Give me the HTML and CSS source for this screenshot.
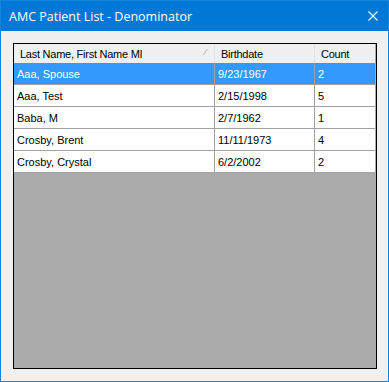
FILE: index.html
```html
<!DOCTYPE html>
<html>
<head>
    <title>AMC Patient List - Denominator</title>
    <link rel="stylesheet" href="styles.css">
</head>
<body>
    <div class="window">
        <div class="titlebar">
            <span class="title">AMC Patient List - Denominator</span>
            <svg class="close" width="10" height="10" viewBox="0 0 10 10">
                <path d="M0.5 0.5 L9.5 9.5 M9.5 0.5 L0.5 9.5" stroke="#fff" stroke-width="1.1" fill="none"/>
            </svg>
        </div>
        <div class="content">
            <div class="grid">
                <table>
                    <thead>
                        <tr>
                            <th class="col-name">Last Name, First Name MI<span class="sort">&#8260;</span></th>
                            <th class="col-date">Birthdate</th>
                            <th class="col-count">Count</th>
                        </tr>
                    </thead>
                    <tbody>
                        <tr class="selected"><td>Aaa, Spouse</td><td>9/23/1967</td><td>2</td></tr>
                        <tr><td>Aaa, Test</td><td>2/15/1998</td><td>5</td></tr>
                        <tr><td>Baba, M</td><td>2/7/1962</td><td>1</td></tr>
                        <tr><td>Crosby, Brent</td><td>11/11/1973</td><td>4</td></tr>
                        <tr><td>Crosby, Crystal</td><td>6/2/2002</td><td>2</td></tr>
                    </tbody>
                </table>
                <div class="empty"></div>
            </div>
        </div>
    </div>
</body>
</html>
```

FILE: styles.css
```css
body {
    margin: 0;
    padding: 0;
    font-family: "Liberation Sans", Arial, sans-serif;
}
.window {
    width: 389px;
    height: 382px;
    box-sizing: border-box;
    border: 1px solid #1883d7;
    background-color: #f0f0f0;
    display: flex;
    flex-direction: column;
}
.titlebar {
    height: 30px;
    background-color: #0078d7;
    display: flex;
    align-items: center;
    justify-content: space-between;
    padding: 0 8px 0 8px;
    flex-shrink: 0;
}
.title {
    color: #fff;
    font-family: "Open Sans", sans-serif;
    font-size: 12.5px;
}
.close {
    margin-right: 2px;
}
.content {
    flex: 1;
    padding: 12px 11px 12px 12px;
    display: flex;
}
.grid {
    flex: 1;
    border: 1px solid #000;
    background-color: #ababab;
    display: flex;
    flex-direction: column;
}
table {
    border-collapse: collapse;
    width: 361px;
    font-size: 11px;
    table-layout: fixed;
}
th {
    background-color: #f0f0f0;
    font-weight: normal;
    text-align: left;
    height: 19px;
    padding: 0 0 0 6px;
    color: #000;
    letter-spacing: -0.25px;
    position: relative;
    border-left: 1px solid #e3e3e3;
}
th:first-child {
    border-left: none;
}
.col-name {
    width: 194px;
}
.col-date {
    width: 93px;
}
.sort {
    position: absolute;
    right: 8px;
    top: 3px;
    color: #999;
    font-size: 9px;
}
td {
    background-color: #fff;
    height: 21px;
    padding: 0 0 0 3px;
    border: 1px solid #a0a0a0;
    border-top: none;
    color: #000;
}
td:first-child {
    border-left: none;
}
td:last-child {
    border-right: none;
}
.selected td {
    background-color: #3399ff;
    color: #fff;
}
.empty {
    flex: 1;
}
```
